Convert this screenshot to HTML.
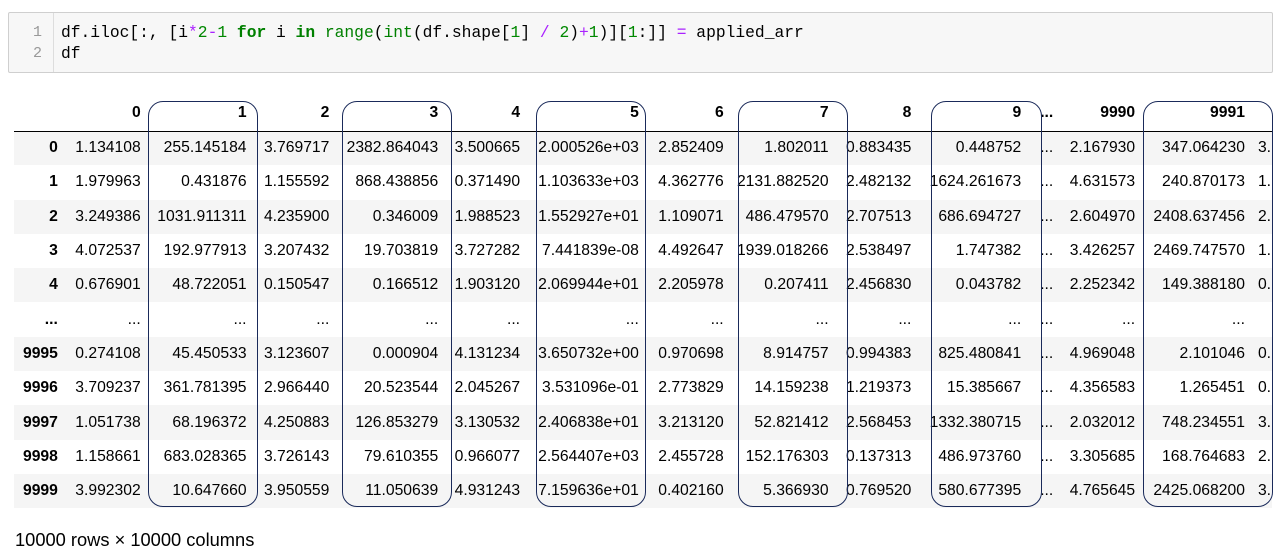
<!DOCTYPE html>
<html><head><meta charset="utf-8"><style>
body{margin:0;width:1280px;height:554px;background:#fff;position:relative;overflow:hidden;font-family:"Liberation Sans",Arial,sans-serif;}
.code{position:absolute;left:8px;top:12px;width:1263px;height:59px;background:#f7f7f7;border:1px solid #cfcfcf;border-radius:2px;}
.gut{position:absolute;left:0;top:0;width:44px;height:59px;border-right:1px solid #ddd;}
.ln{position:absolute;left:0;width:33px;text-align:right;color:#999;font:15px "Liberation Mono",monospace;}
.cl{position:absolute;left:52px;font:16.3px "Liberation Mono",monospace;color:#000;white-space:pre;}
.k{color:#008000;font-weight:bold}.b{color:#008000}.n{color:#080}.o{color:#a2f}
table{position:absolute;left:14px;top:95px;border-collapse:collapse;table-layout:fixed;font-size:15.7px;line-height:18px;color:#000;}
td,th{padding:0 5px 0 0;text-align:right;white-space:nowrap;overflow:visible;}
th{font-weight:bold;}
thead tr{border-bottom:1px solid #000;height:36px;}
tbody tr{height:34.3px;}
tbody tr:nth-child(odd){background:#f5f5f5;}
td.e{text-align:left;padding-left:14px;}
td.l{text-align:left;padding-left:8px;}
.box{position:absolute;top:101px;height:406px;border:1.3px solid #1a2a5a;border-radius:15px;box-sizing:border-box;}
.foot{position:absolute;left:15px;top:529px;font-size:18.3px;}
.clip{position:absolute;left:1272px;top:90px;width:10px;height:430px;background:#fff;}
</style></head><body>
<div class="code"><div class="gut"></div>
<div class="ln" style="top:11px">1</div><div class="ln" style="top:32px">2</div>
<div class="cl" style="top:10px">df.iloc[:, [i<span class="o">*</span><span class="n">2</span><span class="o">-</span><span class="n">1</span> <span class="k">for</span> i <span class="k">in</span> <span class="b">range</span>(<span class="b">int</span>(df.shape[<span class="n">1</span>] <span class="o">/</span> <span class="n">2</span>)<span class="o">+</span><span class="n">1</span>)][<span class="n">1</span>:]] <span class="o">=</span> applied_arr</div>
<div class="cl" style="top:31px">df</div></div>
<table>
<colgroup><col style="width:49px"><col style="width:83px"><col style="width:106px"><col style="width:83px"><col style="width:109px"><col style="width:82px"><col style="width:119px"><col style="width:85px"><col style="width:105px"><col style="width:83px"><col style="width:110px"><col style="width:30px"><col style="width:82px"><col style="width:110px"><col style="width:30px"></colgroup>
<thead><tr><th></th><th>0</th><th>1</th><th>2</th><th>3</th><th>4</th><th>5</th><th>6</th><th>7</th><th>8</th><th>9</th><th style="text-align:left;padding-left:14px">...</th><th>9990</th><th>9991</th><th></th></tr></thead>
<tbody>
<tr><th>0</th><td>1.134108</td><td>255.145184</td><td>3.769717</td><td>2382.864043</td><td>3.500665</td><td>2.000526e+03</td><td>2.852409</td><td>1.802011</td><td>0.883435</td><td>0.448752</td><td class="e">...</td><td>2.167930</td><td>347.064230</td><td class="l">3.</td></tr>
<tr><th>1</th><td>1.979963</td><td>0.431876</td><td>1.155592</td><td>868.438856</td><td>0.371490</td><td>1.103633e+03</td><td>4.362776</td><td>2131.882520</td><td>2.482132</td><td>1624.261673</td><td class="e">...</td><td>4.631573</td><td>240.870173</td><td class="l">1.</td></tr>
<tr><th>2</th><td>3.249386</td><td>1031.911311</td><td>4.235900</td><td>0.346009</td><td>1.988523</td><td>1.552927e+01</td><td>1.109071</td><td>486.479570</td><td>2.707513</td><td>686.694727</td><td class="e">...</td><td>2.604970</td><td>2408.637456</td><td class="l">2.</td></tr>
<tr><th>3</th><td>4.072537</td><td>192.977913</td><td>3.207432</td><td>19.703819</td><td>3.727282</td><td>7.441839e-08</td><td>4.492647</td><td>1939.018266</td><td>2.538497</td><td>1.747382</td><td class="e">...</td><td>3.426257</td><td>2469.747570</td><td class="l">1.</td></tr>
<tr><th>4</th><td>0.676901</td><td>48.722051</td><td>0.150547</td><td>0.166512</td><td>1.903120</td><td>2.069944e+01</td><td>2.205978</td><td>0.207411</td><td>2.456830</td><td>0.043782</td><td class="e">...</td><td>2.252342</td><td>149.388180</td><td class="l">0.</td></tr>
<tr><th>...</th><td>...</td><td>...</td><td>...</td><td>...</td><td>...</td><td>...</td><td>...</td><td>...</td><td>...</td><td>...</td><td class="e">...</td><td>...</td><td>...</td><td></td></tr>
<tr><th>9995</th><td>0.274108</td><td>45.450533</td><td>3.123607</td><td>0.000904</td><td>4.131234</td><td>3.650732e+00</td><td>0.970698</td><td>8.914757</td><td>0.994383</td><td>825.480841</td><td class="e">...</td><td>4.969048</td><td>2.101046</td><td class="l">0.</td></tr>
<tr><th>9996</th><td>3.709237</td><td>361.781395</td><td>2.966440</td><td>20.523544</td><td>2.045267</td><td>3.531096e-01</td><td>2.773829</td><td>14.159238</td><td>1.219373</td><td>15.385667</td><td class="e">...</td><td>4.356583</td><td>1.265451</td><td class="l">0.</td></tr>
<tr><th>9997</th><td>1.051738</td><td>68.196372</td><td>4.250883</td><td>126.853279</td><td>3.130532</td><td>2.406838e+01</td><td>3.213120</td><td>52.821412</td><td>2.568453</td><td>1332.380715</td><td class="e">...</td><td>2.032012</td><td>748.234551</td><td class="l">3.</td></tr>
<tr><th>9998</th><td>1.158661</td><td>683.028365</td><td>3.726143</td><td>79.610355</td><td>0.966077</td><td>2.564407e+03</td><td>2.455728</td><td>152.176303</td><td>0.137313</td><td>486.973760</td><td class="e">...</td><td>3.305685</td><td>168.764683</td><td class="l">2.</td></tr>
<tr><th>9999</th><td>3.992302</td><td>10.647660</td><td>3.950559</td><td>11.050639</td><td>4.931243</td><td>7.159636e+01</td><td>0.402160</td><td>5.366930</td><td>0.769520</td><td>580.677395</td><td class="e">...</td><td>4.765645</td><td>2425.068200</td><td class="l">3.</td></tr>
</tbody></table>
<div class="clip"></div>
<div class="box" style="left:148px;width:110px"></div>
<div class="box" style="left:342px;width:110px"></div>
<div class="box" style="left:536px;width:110px"></div>
<div class="box" style="left:738px;width:110px"></div>
<div class="box" style="left:931px;width:111px"></div>
<div class="box" style="left:1143px;width:130px"></div>
<div class="foot">10000 rows × 10000 columns</div>
</body></html>
